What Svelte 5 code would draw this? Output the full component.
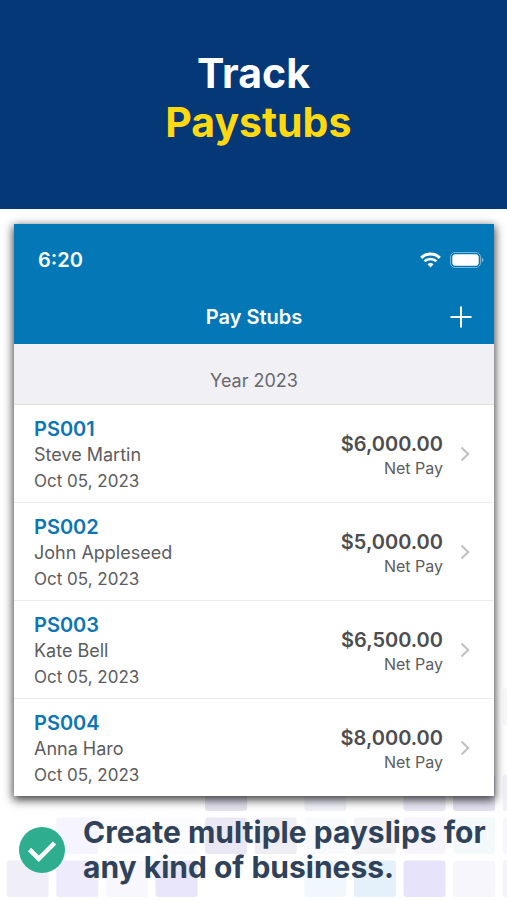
<script lang="ts">
    const paystubs = [
        { id: 'PS001', name: 'Steve Martin', date: 'Oct 05, 2023', amount: '$6,000.00' },
        { id: 'PS002', name: 'John Appleseed', date: 'Oct 05, 2023', amount: '$5,000.00' },
        { id: 'PS003', name: 'Kate Bell', date: 'Oct 05, 2023', amount: '$6,500.00' },
        { id: 'PS004', name: 'Anna Haro', date: 'Oct 05, 2023', amount: '$8,000.00' }
    ];

    // Pale tiles behind the caption, row 0 is the bottom one
    const tiles = [
        { col: 0, row: 0, fill: '#f0eff8' },
        { col: 1, row: 0, fill: '#eeebfc' },
        { col: 2, row: 0, fill: '#f8f7fe' },
        { col: 3, row: 0, fill: '#e9e5fb' },
        { col: 6, row: 0, fill: '#f0f7fd' },
        { col: 7, row: 0, fill: '#e4f0fa' },
        { col: 8, row: 0, fill: '#e7e3fb' },
        { col: 9, row: 0, fill: '#f7f6fd' },
        { col: 10, row: 0, fill: '#f4f2fb' },
        { col: 1, row: 1, fill: '#f6f4fe' },
        { col: 2, row: 1, fill: '#fdfcff' },
        { col: 3, row: 1, fill: '#fcfcff' },
        { col: 4, row: 1, fill: '#e9e8f4' },
        { col: 5, row: 1, fill: '#efeef3' },
        { col: 6, row: 1, fill: '#f9fafe' },
        { col: 7, row: 1, fill: '#f3f3f6' },
        { col: 8, row: 1, fill: '#f8f4fd' },
        { col: 9, row: 1, fill: '#f4fafc' },
        { col: 10, row: 1, fill: '#f7f5fd' },
        { col: 4, row: 2, fill: '#e5e3ef' },
        { col: 6, row: 2, fill: '#f1f1fa' },
        { col: 8, row: 2, fill: '#eae8f6' },
        { col: 9, row: 2, fill: '#e3e0f0' },
        { col: 10, row: 2, fill: '#f1f0f8' },
        { col: 10, row: 4, fill: '#f8f7fb' }
    ];

    const tileX = (col: number) => 6.7 + col * 49.6;
    const tileY = (row: number) => 185.5 - row * 43;
</script>

<main class="page">
    <header class="banner">
        <h1>Track<br /><span>&nbsp;Paystubs</span></h1>
    </header>

    <svg class="tiles" width="560" height="225" viewBox="0 0 560 225" aria-hidden="true">
        {#each tiles as tile}
            <rect x={tileX(tile.col)} y={tileY(tile.row)} width="42" height="36.5" rx="3" fill={tile.fill} />
        {/each}
    </svg>

    <section class="phone">
        <div class="status">
            <span>6:20</span>
            <div class="status-icons">
                <svg width="21" height="16" viewBox="0 0 21 16" role="img" aria-label="Wi-Fi">
                    <path d="M1.200 5.800C6.500.8 14.500.8 19.800 5.800" fill="none" stroke="#fff" stroke-width="3" />
                    <path d="M4.500 9.300C8 6.200 13 6.200 16.500 9.300" fill="none" stroke="#fff" stroke-width="2.700" />
                    <path d="M7.500 12.300c1.800-1.700 4.200-1.700 6 0l-3 3.200z" fill="#fff" />
                </svg>
                <svg width="34" height="16" viewBox="0 0 34 16" role="img" aria-label="Battery">
                    <rect x=".5" y=".5" width="30" height="15" rx="4.600" fill="none" stroke="#fff" stroke-opacity=".45" />
                    <rect x="2.300" y="2.300" width="26.400" height="11.400" rx="3" fill="#fff" />
                    <path d="M31.800 5.500c2 .9 2 4.100 0 5z" fill="#fff" fill-opacity=".5" />
                </svg>
            </div>
        </div>

        <div class="navbar">
            <h2>Pay Stubs</h2>
            <button class="add" type="button" aria-label="Add pay stub">
                <svg width="22" height="22" viewBox="0 0 22 22">
                    <path d="M11 .5v21M.5 11h21" stroke="#fff" stroke-width="2" />
                </svg>
            </button>
        </div>

        <h3 class="year">Year 2023</h3>

        <ul class="list">
            {#each paystubs as stub}
                <li>
                    <a class="row" href="#{stub.id}">
                        <div class="info">
                            <strong>{stub.id}</strong>
                            <span>{stub.name}</span>
                            <span class="date">{stub.date}</span>
                        </div>
                        <div class="pay">
                            <span class="amount">{stub.amount}</span>
                            <span class="net">Net Pay</span>
                        </div>
                        <svg width="10" height="16" viewBox="0 0 10 16" aria-hidden="true">
                            <path d="M1.500 1.500 8.200 8l-6.700 6.500" fill="none" stroke="#c0c0c3" stroke-width="2" />
                        </svg>
                    </a>
                </li>
            {/each}
        </ul>
    </section>

    <footer class="caption">
        <svg width="46" height="46" viewBox="0 0 46 46" aria-hidden="true">
            <circle cx="23" cy="23" r="23" fill="#2eae8e" />
            <path d="M10.500 22.500l9.300 9.300L35.500 16" fill="none" stroke="#fff" stroke-width="4.600" />
        </svg>
        <p>Create multiple payslips for any kind of business.</p>
    </footer>
</main>

<style>
    :global(body) {
        margin: 0;
        background: #fff;
    }

    .page {
        position: relative;
        overflow: hidden;
        font-family: Inter, sans-serif;
        color: #5c5c5e;
    }

    .banner {
        padding: 49px 16px 62px;
        background: #053877;
        text-align: center;
    }

    h1 {
        margin: 0;
        font-size: 41px;
        line-height: 49px;
        font-weight: 700;
        color: #fff;
    }

    h1 span {
        color: #ffd90f;
    }

    .tiles {
        position: absolute;
        left: 0;
        bottom: 0;
    }

    .phone {
        position: relative;
        margin: 15px 13px 0 14px;
        background: #fff;
        box-shadow: 0 3px 9px 1px rgba(0, 0, 0, 0.75);
    }

    .status,
    .navbar {
        display: flex;
        align-items: center;
        background: #0477b6;
        color: #fff;
    }

    .status {
        justify-content: space-between;
        height: 48px;
        padding: 12px 10px 6px 24px;
        font-size: 20px;
        font-weight: 600;
    }

    .status-icons {
        display: flex;
        gap: 9px;
    }

    .navbar {
        display: grid;
        grid-template-columns: 1fr auto 1fr;
        height: 54px;
        padding: 0 22px;
    }

    h2 {
        grid-column: 2;
        margin: 0;
        font-size: 20px;
        font-weight: 600;
    }

    .add {
        justify-self: end;
        display: flex;
        padding: 0;
        border: 0;
        background: none;
        cursor: pointer;
    }

    .year {
        margin: 0;
        padding: 25px 0 11px;
        border-bottom: 1px solid #dededf;
        background: #f1f0f5;
        font-size: 18px;
        line-height: 24px;
        font-weight: 400;
        text-align: center;
        color: #69696b;
    }

    .list {
        margin: 0;
        padding: 0;
        list-style: none;
    }

    li + li {
        border-top: 1px solid #eaeaeb;
    }

    .row {
        display: flex;
        align-items: center;
        padding: 9px 24px 8px 20px;
        color: inherit;
        text-decoration: none;
    }

    .info {
        display: flex;
        flex-direction: column;
        flex: 1;
        padding-top: 2px;
        font-size: 18px;
        line-height: 26px;
    }

    .info strong {
        font-size: 20px;
        font-weight: 600;
        color: #0c75b3;
    }

    .date {
        font-size: 17px;
    }

    .pay {
        display: flex;
        flex-direction: column;
        margin-right: 17px;
        padding-top: 4px;
        text-align: right;
    }

    .amount {
        font-size: 20px;
        line-height: 24px;
        font-weight: 600;
        color: #4d4d4f;
    }

    .net {
        font-size: 16px;
        line-height: 24px;
    }

    .caption {
        position: relative;
        display: flex;
        align-items: center;
        gap: 18px;
        padding: 19px 12px 15px 19px;
    }

    .caption svg {
        flex: none;
    }

    .caption p {
        margin: 0;
        font-size: 30px;
        line-height: 35px;
        font-weight: 700;
        color: #2f4259;
    }
</style>
